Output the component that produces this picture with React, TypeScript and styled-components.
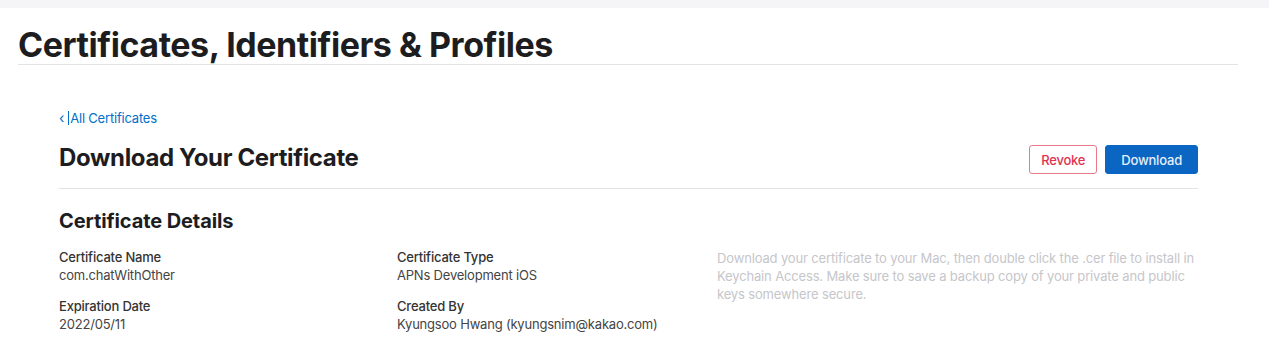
import styled, { createGlobalStyle } from "styled-components";

const GlobalStyle = createGlobalStyle`
  body {
    margin: 0;
    background: #fff;
    font-family: Inter, "Noto Sans", sans-serif;
    color: #1d1d1f;
  }
`;

const TopBar = styled.div`
  height: 8px;
  background: #f5f5f7;
`;

const Page = styled.main`
  padding: 0 31px 0 18px;
`;

const PageHeader = styled.header`
  border-bottom: 1px solid #e3e3e6;
  padding-top: 19px;
  height: 37px;
`;

const PageTitle = styled.h1`
  margin: 0;
  font-size: 34px;
  line-height: 36px;
  font-weight: 700;
  letter-spacing: -0.45px;
  color: #1d1d1f;
`;

const Content = styled.section`
  padding: 42px 40px 0 41px;
`;

const BackLink = styled.a`
  display: inline-flex;
  align-items: center;
  font-size: 13px;
  line-height: 16px;
  color: #0070c9;
  text-decoration: none;
  letter-spacing: -0.2px;
  .chev {
    font-size: 14px;
    margin-right: 4px;
  }
  .caret {
    display: inline-block;
    width: 1px;
    height: 14px;
    background: #0070c9;
    margin-right: 1px;
  }
`;

const TitleRow = styled.div`
  display: flex;
  align-items: center;
  justify-content: space-between;
  padding: 14px 0 14px;
  border-bottom: 1px solid #e3e3e6;
`;

const SectionTitle = styled.h2`
  margin: 0;
  font-size: 24px;
  line-height: 32px;
  font-weight: 700;
  letter-spacing: -0.35px;
`;

const Actions = styled.div`
  display: flex;
  gap: 8px;
  margin-top: 4px;
`;

const Button = styled.button<{ $primary?: boolean }>`
  height: 29px;
  padding: 0 ${(p) => (p.$primary ? "15px" : "11px")};
  border-radius: 3px;
  font-family: inherit;
  font-size: 13px;
  font-weight: 500;
  letter-spacing: -0.2px;
  border: 1px solid ${(p) => (p.$primary ? "#0a66c2" : "#e97b89")};
  background: ${(p) => (p.$primary ? "#0a66c2" : "#fff")};
  color: ${(p) => (p.$primary ? "#e3eefa" : "#e03452")};
`;

const DetailsTitle = styled.h3`
  margin: 19px 0 0;
  font-size: 20px;
  line-height: 26px;
  font-weight: 700;
  letter-spacing: -0.1px;
`;

const DetailsGrid = styled.div`
  display: grid;
  grid-template-columns: 338px 320px 1fr;
  margin-top: 14px;
`;

const Column = styled.div`
  display: flex;
  flex-direction: column;
  gap: 13px;
`;

const Field = styled.div`
  font-size: 13px;
  line-height: 18px;
  letter-spacing: -0.2px;
`;

const Label = styled.div`
  font-weight: 500;
  color: #333;
`;

const Value = styled.div`
  color: #444;
`;

const Note = styled.p`
  margin: 1px 0 0;
  font-size: 13px;
  line-height: 18px;
  color: #c6c6ca;
  letter-spacing: -0.15px;
  max-width: 490px;
`;

const fields = [
  [
    { label: "Certificate Name", value: "com.chatWithOther" },
    { label: "Expiration Date", value: "2022/05/11" },
  ],
  [
    { label: "Certificate Type", value: "APNs Development iOS" },
    { label: "Created By", value: "Kyungsoo Hwang (kyungsnim@kakao.com)" },
  ],
];

export default function App() {
  return (
    <>
      <GlobalStyle />
      <TopBar />
      <Page>
        <PageHeader>
          <PageTitle>Certificates, Identifiers &amp; Profiles</PageTitle>
        </PageHeader>
        <Content>
          <BackLink href="#">
            <span className="chev">‹</span>
            <span className="caret" />
            All Certificates
          </BackLink>
          <TitleRow>
            <SectionTitle>Download Your Certificate</SectionTitle>
            <Actions>
              <Button>Revoke</Button>
              <Button $primary>Download</Button>
            </Actions>
          </TitleRow>
          <DetailsTitle>Certificate Details</DetailsTitle>
          <DetailsGrid>
            {fields.map((col, i) => (
              <Column key={i}>
                {col.map((f) => (
                  <Field key={f.label}>
                    <Label>{f.label}</Label>
                    <Value>{f.value}</Value>
                  </Field>
                ))}
              </Column>
            ))}
            <Note>
              Download your certificate to your Mac, then double click the .cer
              file to install in Keychain Access. Make sure to save a backup
              copy of your private and public keys somewhere secure.
            </Note>
          </DetailsGrid>
        </Content>
      </Page>
    </>
  );
}
